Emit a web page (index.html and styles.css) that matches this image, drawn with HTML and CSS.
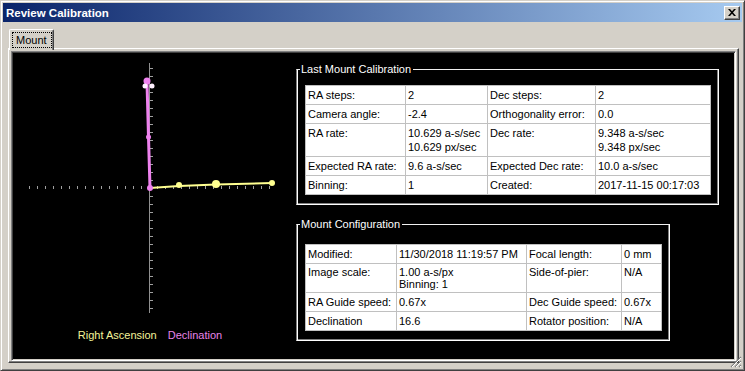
FILE: index.html
```html
<!DOCTYPE html>
<html lang="en">
<head>
    <meta charset="UTF-8">
    <title>Review Calibration</title>
    <link rel="stylesheet" href="styles.css">
</head>
<body>

<div class="window">
    <div class="titlebar">
        <span class="title">Review Calibration</span>
        <button class="close-btn" aria-label="Close">
            <svg width="8" height="7" viewBox="0 0 8 7"><path d="M0 0h2l2 2.3 2-2.3h2l-3 3.5 3 3.5h-2l-2-2.3-2 2.3h-2l3-3.5z" fill="#000"/></svg>
        </button>
    </div>

    <div class="dialog-body">
        <div class="tabs">
            <div class="tab active"><span class="tab-label">Mount</span></div>
        </div>
        <div class="tab-pane">
            <div class="panel">
                <div class="chart-col">
                    <svg class="chart" width="274" height="268" viewBox="13 53 274 268">
                        <line class="axis" x1="149.5" y1="63" x2="149.5" y2="313"/>
                        <line class="ticks" x1="151.5" y1="68" x2="151.5" y2="313"/>
                        <line class="ticks" x1="29" y1="187.5" x2="271" y2="187.5"/>
                        <polyline class="ra" points="150,188 179,186 216,184.5 272,183"/>
                        <circle class="ra-dot" cx="179" cy="185" r="3"/>
                        <circle class="ra-dot" cx="216" cy="184" r="4"/>
                        <circle class="ra-dot" cx="272" cy="183" r="3"/>
                        <polyline class="dec" points="150,188 148.5,137 147,82"/>
                        <circle class="dec-dot" cx="150" cy="188" r="3"/>
                        <circle class="dec-dot" cx="148.5" cy="137" r="2.5"/>
                        <circle class="dec-dot" cx="147" cy="81" r="3.5"/>
                        <circle class="skip-dot" cx="145" cy="86" r="2.5"/>
                        <circle class="skip-dot" cx="152" cy="86" r="2.5"/>
                    </svg>
                    <div class="legend">
                        <span class="legend-ra">Right Ascension</span>
                        <span class="legend-dec">Declination</span>
                    </div>
                </div>

                <div class="info-col">
                    <fieldset class="group group-cal">
                        <legend>Last Mount Calibration</legend>
                        <table class="grid grid-cal">
                            <colgroup><col style="width:100px"><col style="width:82px"><col style="width:108px"><col style="width:115px"></colgroup>
                            <tr><td>RA steps:</td><td>2</td><td>Dec steps:</td><td>2</td></tr>
                            <tr><td>Camera angle:</td><td>-2.4</td><td>Orthogonality error:</td><td>0.0</td></tr>
                            <tr><td>RA rate:</td><td>10.629 a-s/sec<br>10.629 px/sec</td><td>Dec rate:</td><td>9.348 a-s/sec<br>9.348 px/sec</td></tr>
                            <tr><td>Expected RA rate:</td><td>9.6 a-s/sec</td><td>Expected Dec rate:</td><td>10.0 a-s/sec</td></tr>
                            <tr><td>Binning:</td><td>1</td><td>Created:</td><td>2017-11-15 00:17:03</td></tr>
                        </table>
                    </fieldset>

                    <fieldset class="group group-cfg">
                        <legend>Mount Configuration</legend>
                        <table class="grid grid-cfg">
                            <colgroup><col style="width:91px"><col style="width:130px"><col style="width:95px"><col style="width:40px"></colgroup>
                            <tr><td>Modified:</td><td>11/30/2018 11:19:57 PM</td><td>Focal length:</td><td>0 mm</td></tr>
                            <tr class="tight"><td>Image scale:</td><td>1.00 a-s/px<br>Binning: 1</td><td>Side-of-pier:</td><td>N/A</td></tr>
                            <tr><td>RA Guide speed:</td><td>0.67x</td><td>Dec Guide speed:</td><td>0.67x</td></tr>
                            <tr><td>Declination</td><td>16.6</td><td>Rotator position:</td><td>N/A</td></tr>
                        </table>
                    </fieldset>
                </div>
            </div>
        </div>
    </div>

    <svg class="grip" width="12" height="12" viewBox="0 0 12 12">
        <path d="M11 1L1 11M11 5L5 11M11 9L9 11" stroke="#808080" stroke-width="1.2"/>
        <path d="M11 2L2 11M11 6L6 11M11 10L10 11" stroke="#fff" stroke-width="1"/>
    </svg>
</div>

</body>
</html>
```

FILE: styles.css
```css
html, body {
    margin: 0;
}
body {
    font-family: "Liberation Sans", Arial, sans-serif;
    font-size: 11px;
    background: #d4d0c8;
    width: 745px;
    height: 371px;
    overflow: hidden;
}
.window {
    position: relative;
    box-sizing: border-box;
    width: 745px;
    height: 371px;
    border: 1px solid;
    border-color: #d4d0c8 #404040 #404040 #d4d0c8;
    box-shadow: inset 1px 1px 0 #fff, inset -1px -1px 0 #808080;
    padding: 2px;
    background: #d4d0c8;
    display: flex;
    flex-direction: column;
}
.titlebar {
    height: 19px;
    flex: none;
    display: flex;
    align-items: center;
    justify-content: space-between;
    padding: 0 2px 0 3px;
    background: linear-gradient(to right, #0a246a, #a6caf0);
}
.title {
    color: #fff;
    font-weight: bold;
    font-size: 11.5px;
}
.close-btn {
    box-sizing: border-box;
    width: 16px;
    height: 14px;
    padding: 0;
    border: 1px solid;
    border-color: #fff #404040 #404040 #fff;
    box-shadow: inset -1px -1px 0 #808080;
    background: #d4d0c8;
    display: flex;
    align-items: center;
    justify-content: center;
}
.dialog-body {
    flex: 1;
    display: flex;
    flex-direction: column;
    padding: 7px 3px 5px 5px;
}
.tabs {
    display: flex;
    padding-left: 1px;
}
.tab {
    box-sizing: border-box;
    width: 45px;
    height: 21px;
    margin-bottom: -2px;
    position: relative;
    z-index: 1;
    background: #d4d0c8;
    border-top: 1px solid #fff;
    border-left: 1px solid #fff;
    border-right: 1px solid #404040;
    box-shadow: inset -1px 0 0 #808080;
    border-radius: 2px 2px 0 0;
}
.tab-label {
    display: block;
    box-sizing: border-box;
    width: 40px;
    height: 16px;
    margin: 2px 0 0 2px;
    padding-left: 3px;
    line-height: 14px;
    border: 1px dotted #000;
    color: #000;
}
.tab-pane {
    flex: 1;
    display: flex;
    border: 1px solid;
    border-color: #fff #404040 #404040 #fff;
    box-shadow: inset -1px -1px 0 #808080;
    padding: 2px 2px 1px 2px;
}
.panel {
    flex: 1;
    display: flex;
    background: #000;
    border: 1px solid;
    border-color: #808080 #fff #fff #808080;
    box-shadow: inset 1px 1px 0 #404040, inset -1px -1px 0 #d4d0c8;
    padding: 1px;
}
.chart-col {
    width: 274px;
    flex: none;
    display: flex;
    flex-direction: column;
}
.chart {
    display: block;
}
.chart .axis {
    stroke: #909090;
    stroke-width: 1;
}
.chart .ticks {
    stroke: #a0a0a0;
    stroke-width: 3;
    stroke-dasharray: 1 7;
}
.chart .ra {
    fill: none;
    stroke: #ffff90;
    stroke-width: 2;
}
.chart .ra-dot {
    fill: #ffff90;
}
.chart .dec {
    fill: none;
    stroke: #ee82ee;
    stroke-width: 3;
}
.chart .dec-dot {
    fill: #ee82ee;
}
.chart .skip-dot {
    fill: #fff0ff;
}
.legend {
    margin-top: 7px;
    line-height: 14px;
    text-align: center;
    font-size: 11px;
}
.legend-ra {
    color: #f4f49a;
    margin-right: 8px;
}
.legend-dec {
    color: #e884e8;
}
.info-col {
    display: flex;
    flex-direction: column;
    align-items: flex-start;
    gap: 13px;
    padding: 10px 0 0 9px;
}
.group {
    margin: 0;
    padding: 9px 7px 9px 8px;
    border: 1px solid;
    border-color: #f0f0f0 #fff #fff #808080;
    box-shadow: inset 1px 0 0 #fff, inset -1px -1px 0 #808080;
}
.group legend {
    color: #fff;
    line-height: 13px;
    padding: 0 2px 0 1px;
    margin-left: -5px;
}
.group-cfg {
    padding-top: 13px;
}
.grid {
    border-collapse: collapse;
    table-layout: fixed;
    background: #fff;
    color: #000;
}
.grid td {
    border: 1px solid #c0c0c0;
    padding: 2px 2px;
    line-height: 14px;
    vertical-align: top;
    white-space: nowrap;
    overflow: hidden;
}
.grid .tight td {
    line-height: 12px;
}
.grip {
    position: absolute;
    right: 2px;
    bottom: 2px;
}
```
